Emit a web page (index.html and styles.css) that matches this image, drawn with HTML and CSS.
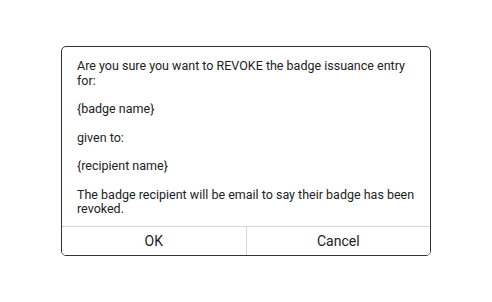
FILE: index.html
```html
<!DOCTYPE html>
<html>
<head>
<meta charset="utf-8">
<link rel="stylesheet" href="styles.css">
</head>
<body>
<div class="dialog">
  <div class="dialog-body">
    <p>Are you sure you want to REVOKE the badge issuance entry for:</p>
    <p>{badge name}</p>
    <p>given to:</p>
    <p>{recipient name}</p>
    <p>The badge recipient will be email to say their badge has been revoked.</p>
  </div>
  <div class="dialog-actions">
    <button class="btn">OK</button>
    <button class="btn">Cancel</button>
  </div>
</div>
</body>
</html>
```
FILE: styles.css
```css
html, body {
  margin: 0;
  padding: 0;
  background: #fff;
}
body {
  height: 100vh;
  display: flex;
  align-items: center;
  justify-content: center;
  font-family: Roboto, "Liberation Sans", sans-serif;
  color: #222;
}
.dialog {
  width: 370px;
  height: 210px;
  box-sizing: border-box;
  border: 1px solid #333;
  border-radius: 5px;
  display: flex;
  flex-direction: column;
  overflow: hidden;
}
.dialog-body {
  flex: 1;
  min-height: 0;
  padding: 12px 15px 0 15px;
  font-size: 12.5px;
  line-height: 14.5px;
}
.dialog-body p {
  margin: 0 0 14px 0;
}
.dialog-body p:last-child {
  margin-bottom: 0;
}
.dialog-actions {
  display: flex;
  flex: none;
  border-top: 1px solid #d6d6d6;
  height: 28px;
}
.btn {
  flex: 1;
  border: none;
  background: #fff;
  font-family: Roboto, "Liberation Sans", sans-serif;
  font-size: 14px;
  color: #222;
  padding: 0;
  margin: 0;
}
.btn + .btn {
  border-left: 1px solid #d6d6d6;
}
```
